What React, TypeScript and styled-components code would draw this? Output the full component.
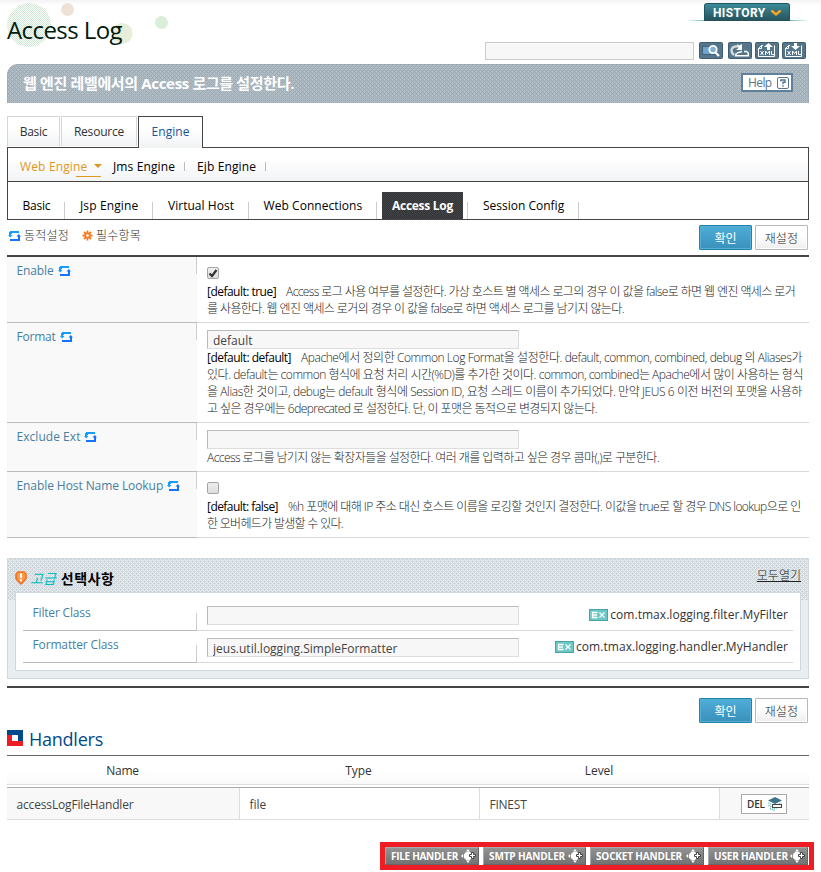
import React from 'react';
import styled, { createGlobalStyle, css } from 'styled-components';

const Global = createGlobalStyle`
  * { box-sizing: border-box; }
  body {
    margin: 0;
    background: linear-gradient(#f3f3f3, #fff 5px);
    font: 12px/17px "Open Sans", "Noto Sans CJK KR", sans-serif;
    color: #333;
    overflow: hidden;
  }
`;

/* 4px crosshatch: one colour on both diagonals over a lighter base */
const hatch = (line: string, base: string) => css`
  background:
    conic-gradient(from 270deg at 1px 1px, ${line} 90deg, transparent 0) 1px 1px / 2px 2px,
    conic-gradient(from 270deg at 1px 1px, ${line} 90deg, transparent 0) 0 0 / 4px 4px,
    conic-gradient(from 270deg at 1px 1px, ${line} 90deg, transparent 0) 2px 2px / 4px 4px,
    ${base};
`;

const T = styled.span<{ $ls?: number }>`
  letter-spacing: ${p => p.$ls ?? 0}px;
  white-space: pre;
`;

const Page = styled.main`
  width: 802px;
  margin-left: 7px;
  height: 872px;
`;

/* ---------- header ---------- */
const Header = styled.header`
  position: relative;
  height: 64px;
  display: flex;
  justify-content: space-between;
`;
const Bubbles = styled.svg`
  position: absolute;
  left: 0;
  top: 0;
`;
const Title = styled.h1`
  position: relative;
  margin: 13px 0 0;
  font-size: 24px;
  line-height: 34px;
  font-weight: 400;
  color: #001a0c;
  letter-spacing: -0.57px;
`;
const Tools = styled.div`
  display: flex;
  flex-direction: column;
  align-items: flex-end;
`;
const HistoryBar = styled.div`
  width: 123px;
  height: 21px;
  padding: 3px 0 0 18px;
  background: linear-gradient(90deg, transparent, #6fb6bd 15%, #6fb6bd 85%, transparent) bottom / 100% 1px no-repeat;
`;
const HistoryTab = styled.div`
  display: flex;
  align-items: center;
  justify-content: space-between;
  width: 86px;
  height: 18px;
  padding: 1px 7px 0 8px;
  border: 1px solid #1d5560;
  border-bottom: 0;
  border-radius: 3px 3px 0 0;
  background: linear-gradient(#3b8b99, #25505a);
  color: #fff;
  font: 700 12px/16px "Roboto", sans-serif;
`;
const SearchRow = styled.div`
  display: flex;
  margin: 21px 3px 0 0;
`;
const Search = styled.input`
  width: 209px;
  height: 18px;
  margin-right: 4px;
  border: 1px solid #ccc;
  background: #f7f7f7;
`;
const Tool = styled.svg`
  width: 24px;
  height: 17px;
  margin-left: 3px;
  &:first-of-type { margin-left: 1px; margin-right: 2px; }
`;

const Banner = styled.div`
  display: flex;
  justify-content: space-between;
  height: 39px;
  padding: 9px 16px 0 15px;
  border: 1px solid #9dabb6;
  border-bottom: 0;
  border-radius: 11px 0 0 0;
  ${hatch('#9daab5', '#b0bcc4')}
  color: #fff;
  font-size: 15px;
  line-height: 18px;
  font-weight: 700;
`;
const Help = styled.button`
  display: flex;
  align-items: center;
  justify-content: space-between;
  width: 52px;
  height: 19px;
  margin: -1px -1px 0 0;
  padding: 0 2px 0 5px;
  border: 2px solid #5f819d;
  background: #fff;
  color: #567590;
  font: 12px/15px "Open Sans", sans-serif;
`;

/* ---------- navigation ---------- */
const Tabs = styled.nav`
  display: flex;
  gap: 1px;
  height: 31px;
  margin-top: 13px;
`;
const Tab = styled.a<{ $w: number; $on?: boolean }>`
  width: ${p => p.$w}px;
  height: 30px;
  border: 1px solid #d6d6d6;
  border-bottom: 0;
  background: linear-gradient(#fff 35%, #f1f3f4);
  color: #333;
  line-height: 29px;
  text-align: center;
  ${p => p.$on && css`
    height: 32px;
    border-color: #444;
    color: #1b539c;
    position: relative;
  `}
`;
const Menus = styled.div`
  height: 73px;
  border: 1px solid #444;
`;
const MenuRow = styled.div`
  display: flex;
  height: 34px;
  padding-left: 12px;
  border-bottom: 1px solid #444;
  background: linear-gradient(#fff 30%, #f1f3f5);
  line-height: 37px;
  color: #000;
`;
const Current = styled.span`
  display: flex;
  position: relative;
  width: 81px;
  margin-right: 12px;
  color: #df981d;
  &::before {
    content: '';
    position: absolute;
    left: 74px;
    top: 16px;
    border: 4px solid transparent;
    border-top-color: #df981d;
  }
  &::after {
    content: '';
    position: absolute;
    right: 0;
    top: 28px;
    width: 25px;
    height: 1px;
    background: #df981d;
  }
`;
const MenuItem = styled.span<{ $w: number; $gap?: number }>`
  width: ${p => p.$w}px;
  margin-right: ${p => p.$gap ?? 0}px;
  background: linear-gradient(#bbb, #bbb) right 14px / 1px 9px no-repeat;
`;
const SubRow = styled.div`
  display: flex;
  height: 37px;
  color: #000;
  line-height: 47px;
`;
const Sub = styled.a<{ $w: number; $p?: number }>`
  width: ${p => p.$w}px;
  padding-left: ${p => p.$p ?? 15}px;
  background: linear-gradient(#ccc, #ccc) right 20px / 1px 17px no-repeat;
`;
const SubOn = styled.a`
  width: 81px;
  height: 27px;
  margin: 10px 4px 0 5px;
  text-align: center;
  line-height: 27px;
  font-weight: 700;
  color: #fff;
  background: repeating-conic-gradient(#303235 0 25%, #434547 0 50%) 0 0 / 2px 2px;
`;
const SubEdge = styled.span`
  width: 1px;
  height: 17px;
  margin-top: 20px;
  background: #ccc;
`;

/* ---------- actions ---------- */
const Actions = styled.div<{ $top: number }>`
  display: flex;
  align-items: flex-start;
  height: ${p => p.$top + 25}px;
  padding: ${p => p.$top}px 1px 0 1px;
`;
const Legend = styled.div`
  display: flex;
  align-items: center;
  gap: 3px;
  margin-top: 2px;
  color: #333;
  font-weight: 300;
  svg:nth-of-type(2) { margin-left: 10px; }
`;
const Button = styled.button<{ $primary?: boolean }>`
  width: 53px;
  height: 25px;
  margin-left: 3px;
  padding: 0;
  border: 1px solid #b7b7b7;
  border-radius: 1px;
  background: linear-gradient(#fff 40%, #eee);
  box-shadow: inset 0 0 0 1px #fff;
  font: 300 12px/20px "Noto Sans CJK KR", sans-serif;
  color: #222;
  &:first-of-type { margin-left: auto; }
  ${p => p.$primary && css`
    border-color: #2383ab;
    background: linear-gradient(#4eadd8, #3990bb);
    box-shadow: inset 0 0 0 1px #55afd5;
    color: #fff;
    font-weight: 400;
  `}
`;

/* ---------- form ---------- */
const Form = styled.section`
  margin-top: 5px;
  border-top: 2px solid #444;
`;
const Row = styled.div<{ $h: number }>`
  display: flex;
  height: ${p => p.$h}px;
`;
const Label = styled.div`
  display: flex;
  align-items: flex-start;
  width: 190px;
  padding: 5px 0 0 9.500px;
  border-bottom: 1px solid #bbb;
  background: linear-gradient(#ccc, #ccc) right 0 top 0 / 1px 17px no-repeat, #f9f9f9;
  color: #467f9f;
  svg { margin: 4px 0 0 4px; }
`;
const Body = styled.div<{ $top: number }>`
  display: flex;
  flex-direction: column;
  align-items: flex-start;
  width: 612px;
  padding: ${p => p.$top}px 0 0 10px;
  border-bottom: 1px solid #d9d9d9;
  color: #222;
`;
const Line = styled.div`
  height: 17px;
  white-space: pre;
  font-weight: 300;
  b { font-weight: 400; color: #000; margin-right: 10px; }
`;
const Field = styled.input`
  display: block;
  width: 312px;
  height: 19px;
  padding: 2px 5px 0;
  border: 1px solid #ddd;
  border-top-color: #bbb;
  border-left-color: #bbb;
  background: #f7f7f7;
  color: #444;
  font: 12px/16px "Open Sans", sans-serif;
`;
const Check = styled.span`
  display: flex;
  align-items: center;
  justify-content: center;
  width: 12px;
  height: 12px;
  margin-bottom: 4px;
  border: 1px solid #a5a5a5;
  border-radius: 2px;
  background: linear-gradient(#eee, #ddd);
`;

/* ---------- advanced ---------- */
const Advanced = styled.section`
  height: 121px;
  margin-top: 20px;
  border: 1px solid #d0d7dd;
  background: #e8edf0;
`;
const AdvTop = styled.div`
  height: 41px;
  padding: 0 7px;
  ${hatch('#e9eef1', '#d0d7dd')}
`;
const AdvHead = styled.div`
  display: flex;
  align-items: center;
  height: 33px;
  padding-top: 5px;
  color: #000;
  font-size: 14px;
  em { color: #00bfc0; margin: 0 5px 0 3px; }
  strong { font-weight: 700; }
`;
const OpenAll = styled.a`
  margin: -5px 0 0 auto;
  font-size: 12px;
  font-weight: 300;
  color: #222;
  text-decoration: underline;
`;
const AdvBox = styled.div`
  height: 79px;
  padding: 5px 7px 0;
  border: 1px solid #d0d7dd;
  background: #fff;
`;
const AdvRow = styled.div`
  display: flex;
  height: 32px;
  &:first-child { height: 33px; padding-top: 1px; }
`;
const AdvLabel = styled.div`
  width: 174px;
  padding: 5px 0 0 9.500px;
  border-bottom: 1px solid #bbb;
  background: linear-gradient(#ccc, #ccc) right bottom / 1px 17px no-repeat;
  color: #467f9f;
`;
const AdvBody = styled.div`
  display: flex;
  flex: 1;
  align-items: flex-start;
  padding: 7px 5px 0 10px;
  border-bottom: 1px solid #d9d9d9;
`;
const Example = styled.span`
  display: flex;
  align-items: center;
  gap: 2px;
  margin-left: auto;
`;
const Rule = styled.hr`
  height: 2px;
  margin: 7px 0 0;
  border: 0;
  background: #444;
`;

/* ---------- handlers ---------- */
const Heading = styled.h2`
  display: flex;
  align-items: center;
  gap: 6px;
  height: 32px;
  margin: 0;
  font-size: 18px;
  font-weight: 400;
  color: #004a8b;
  svg { margin-top: -2px; }
`;
const HeadRow = styled.div`
  display: grid;
  grid-template-columns: 231px 241px 240px 90px;
  height: 30px;
  border-top: 1px solid #666;
  border-bottom: 1px solid #ddd;
  background: linear-gradient(#fff 50%, #f9f9f9);
  line-height: 30px;
  text-align: center;
`;
const DataRow = styled.div`
  display: grid;
  grid-template-columns: 233px 240px 240px 89px;
  grid-template-rows: 31px;
  height: 33px;
  margin-top: 2px;
  border-top: 1px solid #aaa;
  border-bottom: 1px solid #ddd;
  line-height: 33px;
  color: #444;
`;
const Cell = styled.div<{ $shade?: boolean; $last?: boolean }>`
  padding-left: 9.500px;
  border-right: ${p => (p.$last ? 0 : 1)}px solid #ddd;
  background: ${p => (p.$shade ? '#f8f8f8' : '#fff')};
`;
const Delete = styled.button`
  display: flex;
  align-items: center;
  gap: 2px;
  width: 46px;
  height: 20px;
  margin: 6px 0 0 11.500px;
  padding: 0 0 0 5px;
  border: 1px solid #aaa;
  background: #fff;
  color: #333;
  font: 600 10px/16px "Open Sans", sans-serif;
`;
const Marked = styled.div`
  display: flex;
  gap: 4px;
  width: 434px;
  height: 28px;
  margin: 22px 0 0 373px;
  border: 5px solid #ee1c25;
  background: #fff;
`;
const Handler = styled.button<{ $w: number }>`
  display: flex;
  align-items: center;
  justify-content: space-between;
  flex: none;
  width: ${p => p.$w}px;
  height: 18px;
  padding: 0 2px 0 5px;
  border: 1px solid #666;
  border-top-color: #aaa;
  border-left-color: #aaa;
  background: linear-gradient(#929292, #737373);
  color: #fff;
  font: 700 10px/16px "Open Sans", sans-serif;
`;

const Sync = () => (
  <svg width="13" height="10" viewBox="0 0 13 10" fill="none" strokeWidth="2">
    <path d="M2 5V2H3V1H11" stroke="#149cff" />
    <path d="M0 4H4.500L2.200 6.500Z" fill="#149cff" />
    <path d="M11 5V9H2" stroke="#1673ff" />
    <path d="M8.500 5.500H13L10.800 3Z" fill="#1673ff" />
  </svg>
);
const Flower = () => (
  <svg width="11" height="11" viewBox="0 0 11 11">
    <path d="M5.500 .5V10.500M.5 5.500H10.500M2 2L9 9M9 2L2 9" stroke="#f47a20" strokeWidth="1.800" />
    <circle cx="5.500" cy="5.500" r="3" fill="#f47a20" />
    <circle cx="5.500" cy="5.500" r="1.300" fill="#fff" />
  </svg>
);
const Plus = () => (
  <svg width="15" height="14" viewBox="0 0 15 14">
    <path d="M7 0L9 2.500H5ZM0 7L2 5V9ZM7 14L9 11.500H5Z" fill="#fff" />
    <circle cx="7" cy="7" r="4.300" fill="#fff" />
    <path d="M10.500 3.500H12.500V5.500H14.500V7.500H12.500V9.500H10.500V7.500H8.500V5.500H10.500Z" fill="#fff" stroke="#444" />
  </svg>
);
const ToolFrame = () => (
  <rect x=".5" y=".5" width="23" height="16" rx="1" fill="#54758a" stroke="#405d70" />
);
const XmlTool = ({ down }: { down?: boolean }) => (
  <Tool viewBox="0 0 24 17">
    <ToolFrame />
    <path d="M8 3.500H6.500L3.500 6.500V14.500H19.500V3.500M6.500 3.500V6.500H3.500" fill="none" stroke="#fff" />
    <path d={down ? 'M12 1H15V4H18L13.500 8L9 4H12Z' : 'M13.500 1L18 5H15V8H12V5H9Z'} fill="#fff" />
    <path d="M5.500 9L8.500 13M8.500 9L5.500 13M10.500 13V9L12.500 11.500L14.500 9V13M16.500 9V12.500H19" fill="none" stroke="#fff" />
  </Tool>
);

const rows = [
  { h: 66, label: 'Enable', ls: -0.13, top: 10, kind: 'on' },
  { h: 100, label: 'Format', ls: -0.23, top: 7, kind: 'text', value: 'default' },
  { h: 49, label: 'Exclude Ext', ls: 0.04, top: 7, kind: 'text', value: '' },
  { h: 66, label: 'Enable Host Name Lookup', ls: -0.08, top: 10, kind: 'off' },
];
const notes: { def?: string; dls?: number; text: string; ls: number }[][] = [
  [
    { def: '[default: true]', dls: -0.52, text: 'Access 로그 사용 여부를 설정한다. 가상 호스트 별 액세스 로그의 경우 이 값을 false로 하면 웹 엔진 액세스 로거', ls: -0.605 },
    { text: '를 사용한다. 웹 엔진 액세스 로거의 경우 이 값을 false로 하면 액세스 로그를 남기지 않는다.', ls: -0.592 },
  ],
  [
    { def: '[default: default]', dls: -0.5, text: 'Apache에서 정의한 Common Log Format을 설정한다. default, common, combined, debug 의 Aliases가', ls: -0.431 },
    { text: '있다. default는 common 형식에 요청 처리 시간(%D)를 추가한 것이다. common, combined는 Apache에서 많이 사용하는 형식', ls: -0.471 },
    { text: '을 Alias한 것이고, debug는 default 형식에 Session ID, 요청 스레드 이름이 추가되었다. 만약 JEUS 6 이전 버전의 포맷을 사용하', ls: -0.415 },
    { text: '고 싶은 경우에는 6deprecated 로 설정한다. 단, 이 포맷은 동적으로 변경되지 않는다.', ls: -0.576 },
  ],
  [{ text: 'Access 로그를 남기지 않는 확장자들을 설정한다. 여러 개를 입력하고 싶은 경우 콤마(,)로 구분한다.', ls: -0.577 }],
  [
    { def: '[default: false]', dls: -0.55, text: '%h 포맷에 대해 IP 주소 대신 호스트 이름을 로깅할 것인지 결정한다. 이값을 true로 할 경우 DNS lookup으로 인', ls: -0.56 },
    { text: '한 오버헤드가 발생할 수 있다.', ls: -0.695 },
  ],
];

const Submit = () => (
  <>
    <Button $primary>확인</Button>
    <Button><T $ls={0.2}>재설정</T></Button>
  </>
);

const ExampleText = ({ text }: { text: string }) => (
  <Example>
    <svg width="19" height="12" viewBox="0 0 19 12">
      <rect x=".5" y=".5" width="18" height="11" fill="#6cc7c7" stroke="#4aa3a5" />
      <path d="M8.500 3.500H3.500V8.500H8.500M3.500 6H8M10.500 3.500L15.500 8.500M15.500 3.500L10.500 8.500" fill="none" stroke="#fff" strokeWidth="1.300" />
    </svg>
    <T $ls={0.05}>{text}</T>
  </Example>
);

export default function App() {
  return (
    <Page>
      <Global />
      <Header>
        <Bubbles width="170" height="50" viewBox="7 0 170 50">
          <defs>
            <pattern id="dots" width="2" height="2" patternUnits="userSpaceOnUse">
              <path d="M0 0H1V1H0ZM1 1H2V2H1Z" fill="#cbe6d1" />
            </pattern>
          </defs>
          <circle cx="29" cy="25" r="22" fill="url(#dots)" />
          <circle cx="67.500" cy="9.500" r="6.500" fill="#eee2d8" />
          <circle cx="122" cy="33.500" r="10.500" fill="#e7eed8" />
          <circle cx="161.500" cy="22.500" r="6.500" fill="#d9efda" />
        </Bubbles>
        <Title>Access Log</Title>
        <Tools>
          <HistoryBar>
            <HistoryTab>
              <T $ls={0.4}>HISTORY</T>
              <svg width="12" height="8" viewBox="0 0 12 8">
                <path d="M1.500 1.500L6 5.500L10.500 1.500" fill="none" stroke="#ffa51e" strokeWidth="2.400" />
              </svg>
            </HistoryTab>
          </HistoryBar>
          <SearchRow>
            <Search />
            <Tool viewBox="0 0 24 17">
              <ToolFrame />
              <rect x="3.500" y="4.500" width="14" height="8" fill="#6fa4cc" stroke="#40627a" />
              <circle cx="14" cy="7.500" r="3.700" fill="#7fb0d6" stroke="#fff" strokeWidth="1.800" />
              <path d="M16.500 10.500L20 14" stroke="#fff" strokeWidth="2.200" />
            </Tool>
            <Tool viewBox="0 0 24 17">
              <ToolFrame />
              <path d="M6 13C1.500 9 3.500 3.500 10 4.500" fill="none" stroke="#d5dce0" strokeWidth="2.400" />
              <path d="M9 1.500L11 3.500L14 2V8H8L10.500 6Z" fill="#fff" />
              <path d="M8.500 11L7.500 13.800H20.300V11L18.500 9.500H16M9 11L14 9.500" fill="none" stroke="#fff" strokeWidth="1.500" />
            </Tool>
            <XmlTool />
            <XmlTool down />
          </SearchRow>
        </Tools>
      </Header>

      <Banner>
        <T $ls={-0.34}>웹 엔진 레벨에서의 Access 로그를 설정한다.</T>
        <Help>
          <T $ls={-0.6}>Help</T>
          <svg width="12" height="12" viewBox="0 0 12 12" fill="none" stroke="#567590">
            <rect x=".5" y=".5" width="11" height="11" rx="1.500" />
            <path d="M3.800 4.500V3H8V5.300H6V7.200M6 8.300V9.800" strokeWidth="1.400" />
          </svg>
        </Help>
      </Banner>

      <Tabs>
        <Tab $w={53}><T $ls={-0.3}>Basic</T></Tab>
        <Tab $w={76}><T $ls={-0.2}>Resource</T></Tab>
        <Tab $w={65} $on><T $ls={0.05}>Engine</T></Tab>
      </Tabs>
      <Menus>
        <MenuRow>
          <Current><T $ls={0.15}>Web Engine</T></Current>
          <MenuItem $w={72} $gap={12}><T $ls={0.12}>Jms Engine</T></MenuItem>
          <MenuItem $w={69}><T $ls={0.12}>Ejb Engine</T></MenuItem>
        </MenuRow>
        <SubRow>
          <Sub $w={57} $p={14.500}><T $ls={-0.25}>Basic</T></Sub>
          <Sub $w={88}><T $ls={0.12}>Jsp Engine</T></Sub>
          <Sub $w={96}><T $ls={0.03}>Virtual Host</T></Sub>
          <Sub $w={128} $p={14.500}><T $ls={0.06}>Web Connections</T></Sub>
          <SubOn><T $ls={-0.27}>Access Log</T></SubOn>
          <SubEdge />
          <Sub $w={111}><T>Session Config</T></Sub>
        </SubRow>
      </Menus>

      <Actions $top={5}>
        <Legend>
          <Sync /><T $ls={0.2}>동적설정</T>
          <Flower /><T $ls={0.2}>필수항목</T>
        </Legend>
        <Submit />
      </Actions>

      <Form>
        {rows.map((r, i) => (
          <Row key={r.label} $h={r.h}>
            <Label><T $ls={r.ls}>{r.label}</T><Sync /></Label>
            <Body $top={r.top}>
              {r.kind === 'text' ? (
                <Field defaultValue={r.value} />
              ) : (
                <Check>
                  {r.kind === 'on' && (
                    <svg width="10" height="10" viewBox="0 0 10 10">
                      <path d="M1.500 5.500L4 8L8.500 2" fill="none" stroke="#333" strokeWidth="2.200" />
                    </svg>
                  )}
                </Check>
              )}
              {notes[i].map(n => (
                <Line key={n.text}>
                  {n.def && <b><T $ls={n.dls}>{n.def}</T></b>}
                  <T $ls={n.ls}>{n.text}</T>
                </Line>
              ))}
            </Body>
          </Row>
        ))}
      </Form>

      <Advanced>
        <AdvTop>
          <AdvHead>
            <svg width="12" height="14" viewBox="0 0 12 14">
              <path d="M3 1H9L11 3V7.500L9 10L6 13L3 10L1 7.500V3Z" fill="#ff9a4a" stroke="#f0701a" strokeLinejoin="round" strokeWidth="1.500" />
              <path d="M6 2.500V7M6 8.300V10.300" stroke="#fff" strokeWidth="2" />
            </svg>
            <em>고급</em>
            <strong><T $ls={0.5}>선택사항</T></strong>
            <OpenAll>모두열기</OpenAll>
          </AdvHead>
          <AdvBox>
            <AdvRow>
              <AdvLabel><T $ls={-0.17}>Filter Class</T></AdvLabel>
              <AdvBody><Field /><ExampleText text="com.tmax.logging.filter.MyFilter" /></AdvBody>
            </AdvRow>
            <AdvRow>
              <AdvLabel><T $ls={-0.14}>Formatter Class</T></AdvLabel>
              <AdvBody>
                <Field defaultValue="jeus.util.logging.SimpleFormatter" />
                <ExampleText text="com.tmax.logging.handler.MyHandler" />
              </AdvBody>
            </AdvRow>
          </AdvBox>
        </AdvTop>
      </Advanced>
      <Rule />
      <Actions $top={10}><Submit /></Actions>

      <Heading>
        <svg width="16" height="16" viewBox="0 0 16 16">
          <path d="M0 0H5V11H16V16H0Z" fill="#ee1c25" />
          <path d="M0 0H16V11H11V5H0Z" fill="#004a8b" />
          <rect x="5" y="5" width="6" height="6" fill="#fff" />
        </svg>
        <T $ls={-0.24}>Handlers</T>
      </Heading>
      <HeadRow>
        <T $ls={-0.3}>Name</T>
        <T $ls={-0.1}>Type</T>
        <T $ls={-0.1}>Level</T>
      </HeadRow>
      <DataRow>
        <Cell $shade><T $ls={-0.16}>accessLogFileHandler</T></Cell>
        <Cell><T>file</T></Cell>
        <Cell><T $ls={-0.24}>FINEST</T></Cell>
        <Cell $shade $last>
          <Delete>
            <T $ls={-0.2}>DEL</T>
            <svg width="16" height="14" viewBox="0 0 16 14">
              <path d="M8 0L15 3.500L8 7L1 3.500Z" fill="#3f738c" />
              <path d="M1.500 6L8 9L14.500 6M1.500 8.500L8 11.500L12 9.500M3 11.500L8 13.500" fill="none" stroke="#58aeb5" strokeDasharray="1 1" strokeWidth="1.500" />
              <rect x="5.500" y="7.500" width="9" height="3" fill="#fff" stroke="#444" />
            </svg>
          </Delete>
        </Cell>
      </DataRow>

      <Marked>
        <Handler $w={94}><T $ls={-0.3}>FILE HANDLER</T><Plus /></Handler>
        <Handler $w={103}><T $ls={-0.12}>SMTP HANDLER</T><Plus /></Handler>
        <Handler $w={114}><T $ls={-0.17}>SOCKET HANDLER</T><Plus /></Handler>
        <Handler $w={100}><T $ls={-0.15}>USER HANDLER</T><Plus /></Handler>
      </Marked>
    </Page>
  );
}
